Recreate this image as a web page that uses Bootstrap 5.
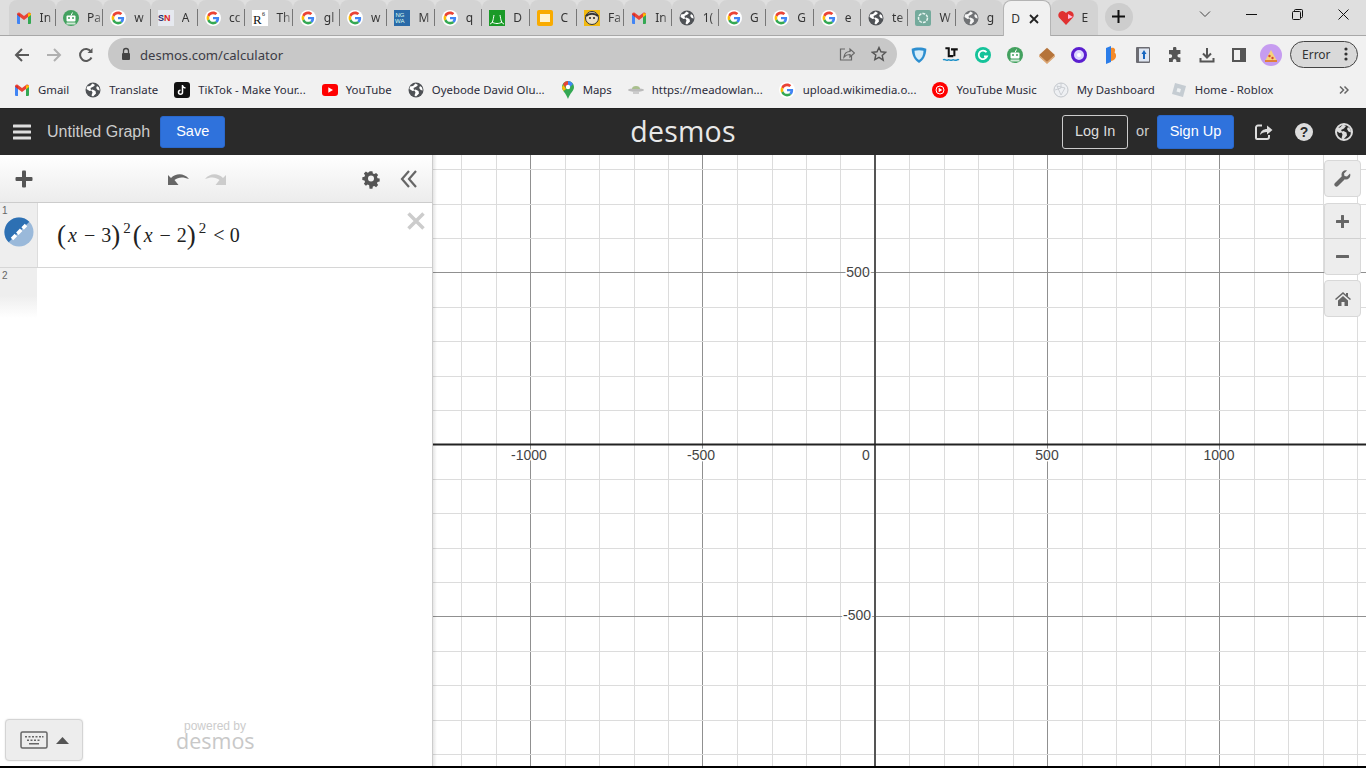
<!DOCTYPE html>
<html lang="en">
<head>
    <meta charset="UTF-8">
    <meta name="viewport" content="width=device-width, initial-scale=1.0">
    <title>Desmos | Graphing Calculator</title>
    <link href="https://cdn.jsdelivr.net/npm/bootstrap@5.3.0/dist/css/bootstrap.min.css" rel="stylesheet">
    <style>
        html, body { height: 100%; overflow: hidden; background: #fff; }
        body { font-family: "Liberation Sans", Arial, sans-serif; }

        /* browser chrome */
        .tab-strip { height: 36px; background: #dfdfdf; padding-left: 8.6px; border-bottom: 1px solid #a8a8a8; }
        .tab-item { width: 47.36px; height: 35px; background: #d3d3d3; padding-left: 7px; margin-top: 0; flex: none;
            position: relative; border-radius: 8px 8px 0 0; font: 12px "Noto Sans", sans-serif; color: #333; }
        .tab-item::after { content: ""; position: absolute; right: 0; top: 9px; height: 17px; width: 1px; background: #777; }
        .tab-item.is-active { background: #f1f1f1; height: 36px; border: 1px solid #b4b4b4; border-bottom: 0; z-index: 1; }
        .tab-item.is-active::after, .tab-item.no-sep::after { display: none; }
        .tab-item svg { flex: none; }
        .tab-title { margin-left: 8px; width: 16px; overflow: hidden; white-space: nowrap;
            -webkit-mask-image: linear-gradient(90deg, #000 40%, rgba(0,0,0,.25)); mask-image: linear-gradient(90deg, #000 40%, rgba(0,0,0,.25)); }
        .tab-new { width: 28px; height: 28px; border-radius: 50%; background: #cdcdcd; margin-left: 7px; }
        .win-ctl { width: 46px; height: 28px; flex: none; }
        .tool-bar { height: 36px; background: #f1f1f1; padding: 0; flex: none; }
        .nav-ico { width: 32px; flex: none; }
        .omni { width: 789px; height: 32px; border-radius: 16px; background: #c8c8c8; margin-left: 6px; padding: 0 10px 0 12px; flex: none;
            font: 13.1px "Noto Sans", sans-serif; color: #3c3c46; }
        .omni-url { padding-top: 2px; }
        .ext-ico { width: 32px; flex: none; }
        .ext-first { margin-left: 6px; }
        .err-pill { width: 68px; height: 27px; border: 1px solid #444; border-radius: 14px; background: #d9d9d9; margin-left: 3px;
            font: 12px "Noto Sans", sans-serif; color: #333; padding: 0 9px 0 11px; }
        .bm-bar { height: 37px; background: #f1f1f1; padding-left: 14px; flex: none; font: 11.4px "Noto Sans", sans-serif; color: #2c2c3a; border-bottom: 1px solid #222; gap: 16px; }
        .bm-item { flex: none; }
        .bm-item span { margin-left: 8px; white-space: nowrap; padding-bottom: 2px; }

        /* desmos header */
        .dcg-head { height: 46px; background: #2a2a2a; color: #ccc; flex: none; padding: 0 13px 0 13px; position: relative; font-size: 16px; }
        .dcg-title { margin-left: 16px; color: #ccc; }
        .dcg-btn { background: #2f72dc; border: 1px solid #2a68cc; color: #fff; font-size: 14.5px; border-radius: 3px; padding: 0; height: 32px; }
        .dcg-logo { position: absolute; left: 0; right: 0; top: 0; height: 46px; text-align: center; font: 400 28.5px/45px "Open Sans", sans-serif; letter-spacing: .2px; color: #e8e8e8; pointer-events: none; }
        .dcg-login { width: 66px; height: 34px; border: 1px solid #ccc; background: transparent; color: #ddd; font-size: 14.5px; border-radius: 3px; padding: 0; }
        .dcg-or { margin: 0 8px; font-size: 14.5px; }

        /* expression list */
        .dcg-body { min-height: 0; position: relative; }
        .dcg-side { width: 433px; flex: none; border-right: 1px solid #ccc; background: #fff; position: relative; z-index: 1; }
        .side-top { height: 48px; background: linear-gradient(#fff, #ececec); border-bottom: 1px solid #ccc; flex: none; padding: 0 14px 0 15px; }
        .expr-row { height: 65px; border-bottom: 1px solid #d6d6d6; flex: none; position: relative; }
        .expr-gutter { width: 38px; background: #eee; border-right: 1px solid #ddd; flex: none; font-size: 10px; color: #666; padding: 0 0 0 2px; position: relative; }
        .expr-gutter.fade-out { height: 50px; background: linear-gradient(#eee 55%, #fff); border-right-color: #fff; }
        .expr-swatch { position: absolute; left: 4px; top: 14px; }
        .expr-math { font: 20px "Liberation Serif", serif; color: #222; padding: 19px 0 0 19px; white-space: nowrap; }
        .expr-math i { margin: 0 1px 0 2px; }
        .expr-math .par { font-size: 27px; font-weight: 300; line-height: 1; vertical-align: -2px; }
        .expr-math .ope { margin: 0 6px; }
        .expr-math .ope-lt { margin: 0 5px 0 5px; }
        .expr-math sup { font-size: 15px; top: -.6em; margin: 0 2px 0 3px; }
        .expr-del { position: absolute; right: 7px; top: 9px; }
        .side-foot { margin-top: auto; height: 47px; flex: none; position: relative; }
        .kbd-btn { position: absolute; left: 5px; top: 0; width: 78px; height: 42px; background: #ededed; border: 1px solid #d4d4d4; border-radius: 4px; box-shadow: 0 0 2px rgba(0,0,0,.12); }
        .powered { position: absolute; left: 176px; top: 1px; width: 78px; text-align: center; color: #ccc; font-size: 12px; line-height: 12px; }
        .powered b { display: block; font: 400 21.5px/19px "Open Sans", sans-serif; margin-top: -1px; color: #c8c8c8; }

        /* graph paper */
        .dcg-paper { min-width: 0; position: relative; background: #fff; overflow: hidden; }
        .dcg-paper::before { content: ""; position: absolute; left: 0; top: 0; bottom: 0; width: 4px; background: linear-gradient(90deg, rgba(0,0,0,.1), transparent); }
        .dcg-paper svg.paper { display: block; }
        .paper text { font: 14px "Liberation Sans", sans-serif; fill: #444; stroke: #fff; stroke-width: 3px; paint-order: stroke; text-anchor: middle; }
        .tool-col { position: absolute; right: 5px; top: 5px; width: 37px; }
        .tool-btn { width: 37px; height: 37px; background: #ededed; border: 1px solid #d8d8d8; border-radius: 4px; }
        .tool-btn.top-half { height: 36px; border-bottom: 1px solid #d0d0d0; border-radius: 4px 4px 0 0; }
        .tool-btn.bot-half { height: 36px; border-top: 0; border-radius: 0 0 4px 4px; }
        .bot-line { height: 2px; background: #000; flex: none; }
    </style>
</head>
<body class="d-flex flex-column">
    <svg width="0" height="0" class="position-absolute">
        <symbol id="i-g" viewBox="-6 -6 60 60"><circle cx="24" cy="24" r="30" fill="#fff"/><path fill="#EA4335" d="M24 9.5c3.54 0 6.71 1.22 9.21 3.6l6.85-6.85C35.9 2.38 30.47 0 24 0 14.62 0 6.51 5.38 2.56 13.22l7.98 6.19C12.43 13.72 17.74 9.5 24 9.5z"/><path fill="#4285F4" d="M46.98 24.55c0-1.57-.15-3.09-.38-4.55H24v9.02h12.94c-.58 2.96-2.26 5.48-4.78 7.18l7.73 6c4.51-4.18 7.09-10.36 7.09-17.65z"/><path fill="#FBBC05" d="M10.53 28.59c-.48-1.45-.76-2.99-.76-4.59s.27-3.14.76-4.59l-7.98-6.19C.92 16.46 0 20.12 0 24c0 3.88.92 7.54 2.56 10.78l7.97-6.19z"/><path fill="#34A853" d="M24 48c6.48 0 11.93-2.13 15.89-5.81l-7.73-6c-2.15 1.45-4.92 2.3-8.16 2.3-6.26 0-11.57-4.22-13.47-9.91l-7.98 6.19C6.51 42.62 14.62 48 24 48z"/></symbol>
        <symbol id="i-gmail" viewBox="0 0 16 16"><path fill="#4285F4" d="M1 4h3v10H2a1 1 0 0 1-1-1z"/><path fill="#34A853" d="M12 4h3v9a1 1 0 0 1-1 1h-2z"/><path fill="#EA4335" d="M1 4.5C1 2.8 2.6 2 4 3l4 3 4-3c1.4-1 3-.2 3 1.500L12 7 8 10 4 7z"/><path fill="#C5221F" d="M1 4.500 4 7V4z" opacity=".6"/><path fill="#FBBC04" d="M12 3.200 15 3.600V5l-3 2.200z"/></symbol>
        <symbol id="i-globe" viewBox="0 0 16 16"><circle cx="8" cy="8" r="7.500" fill="#4f5256"/><path fill="#fff" d="M7.500 1.500 5 4 2 4.500 1.500 7l3 2 2-.5 1 2-1 3 1.500 1L11 11.500 10.500 9 7.500 7.500 6 8 5.500 6l3-1.500L10 3zM12 4l2 1.500.7 3-2-.5-1.500-2z"/></symbol>
        <symbol id="i-robot" viewBox="0 0 16 16"><circle cx="8" cy="8" r="8" fill="#43a15f"/><rect x="3.500" y="5.500" width="9" height="6" rx="1" fill="#fff"/><circle cx="6" cy="8" r="1" fill="#43a15f"/><circle cx="10" cy="8" r="1" fill="#43a15f"/><path d="M8 5.500 9.500 2.500" stroke="#fff"/><path d="M3.500 12.500h9v2h-9z" fill="#cfe8d6"/></symbol>
    </svg>

    <!-- tabs -->
    <div class="tab-strip d-flex flex-none" id="tabStrip"></div>

    <!-- toolbar -->
    <div class="tool-bar d-flex align-items-center">
        <div class="nav-ico text-center" style="margin-left:6px"><svg width="16" height="16" viewBox="0 0 16 16" fill="none" stroke="#5a5a5a" stroke-width="2"><path d="M15 8H2M8 2 2 8l6 6"/></svg></div>
        <div class="nav-ico text-center"><svg width="16" height="16" viewBox="0 0 16 16" fill="none" stroke="#b0b0b0" stroke-width="2"><path d="M1 8h13M8 2l6 6-6 6"/></svg></div>
        <div class="nav-ico text-center"><svg width="16" height="16" viewBox="0 0 16 16" fill="none" stroke="#5a5a5a" stroke-width="2"><path d="M13.500 10.500A6 6 0 1 1 13 4.500"/><path d="M14.500 1v5h-5z" fill="#5a5a5a" stroke="none"/></svg></div>
        <div class="omni d-flex align-items-center">
            <svg width="12" height="14" viewBox="0 0 12 14" class="me-2"><rect x="2" y="6" width="8" height="7" rx="1" fill="#444"/><path d="M3.500 6V4a2.500 2.500 0 0 1 5 0v2" fill="none" stroke="#444" stroke-width="1.300"/></svg>
            <span class="omni-url">desmos.com/calculator</span>
            <svg class="ms-auto" width="16" height="16" viewBox="0 0 16 16" fill="none" stroke="#666" stroke-width="1.200"><path d="M6 3H1.500v11h11v-4"/><path d="M5 11c.5-4 3-5.500 6-5.500V3l4.500 4-4.500 4V8.500c-2.500 0-4.500.7-6 2.500z"/></svg>
            <svg style="margin-left:16px" width="16" height="16" viewBox="0 0 16 16" fill="none" stroke="#555" stroke-width="1.400"><path d="m8 1.500 2 4.300 4.700.5-3.500 3.200 1 4.700L8 11.300l-4.200 2.400 1-4.700L1.300 6.300 6 5.800z"/></svg>
        </div>
        <div class="ext-ico ext-first text-center"><svg width="18" height="18" viewBox="0 0 16 16"><path d="M1.500 2.500C5 1 11 1 14.500 2.500 14.500 8 12 13 8 15 4 13 1.500 8 1.500 2.500z" fill="#2e8fd0"/><path d="M4 4.200c2.500-.6 5.500-.6 8 0C12 8 10.500 11 8 12.500 5.500 11 4 8 4 4.200z" fill="#d8eefa"/></svg></div>
        <div class="ext-ico text-center"><svg width="18" height="18" viewBox="0 0 16 16"><path d="M3 2h3v7h4M8 3h6M11 3v6" fill="none" stroke="#111" stroke-width="1.800"/><path d="M1 12.500c1.500-1.500 2.500 1 4 0s2.500 1 4 0 2.500 1 4 0 1.500-.5 2 0" fill="none" stroke="#1c90c8" stroke-width="1.300"/></svg></div>
        <div class="ext-ico text-center"><svg width="16" height="16" viewBox="0 0 16 16"><circle cx="8" cy="8" r="8" fill="#15c39a"/><path d="M11.500 5.300A4.300 4.300 0 1 0 12 9.500H9" fill="none" stroke="#fff" stroke-width="1.800"/></svg></div>
        <div class="ext-ico text-center"><svg width="16" height="16"><use href="#i-robot"/></svg></div>
        <div class="ext-ico text-center"><svg width="18" height="18" viewBox="0 0 16 16"><path d="M1 8 8 1.500l7 6.500-7 6.500z" fill="#b5743a"/><path d="M1 8l7 6.500 7-6.500v1.500L8 16 1 9.500z" fill="#dba26b"/></svg></div>
        <div class="ext-ico text-center"><svg width="16" height="16" viewBox="0 0 16 16"><circle cx="8" cy="8" r="6.500" fill="#dcd6ff" stroke="#5b1fd0" stroke-width="3"/><circle cx="8" cy="8" r="2" fill="#fff"/></svg></div>
        <div class="ext-ico text-center"><svg width="16" height="18" viewBox="0 0 16 18"><path d="M3 2 8 0v16l-5 2z" fill="#2b7de9"/><path d="M8 2c4-1 5 2 3.500 4.500C14 8 14 14 8 15z" fill="#f58b2a"/></svg></div>
        <div class="ext-ico text-center"><svg width="16" height="18" viewBox="0 0 16 18"><rect x="1" y="1" width="14" height="16" fill="#6c6c72" rx="1"/><rect x="4" y="2.500" width="10" height="13" fill="#dfe6f2"/><path d="M9 4 6.500 8H8v5h2V8h1.500z" fill="#1565c0"/></svg></div>
        <div class="ext-ico text-center"><svg width="16" height="16" viewBox="0 0 16 16"><path fill="#555" d="M6 1.500a1.700 1.700 0 0 1 3.400 0V3h4v4h-1.200a1.800 1.800 0 0 0 0 3.600h1.200V15h-4v-1.200a1.800 1.800 0 0 0-3.600 0V15H2v-4h1.300a1.900 1.900 0 0 0 0-3.800H2V3h4z"/></svg></div>
        <div class="ext-ico text-center"><svg width="16" height="16" viewBox="0 0 16 16" fill="none" stroke="#555" stroke-width="2"><path d="M8 1v9M4 6.500 8 10.500l4-4M1.500 11v3.500h13V11"/></svg></div>
        <div class="ext-ico text-center"><svg width="14" height="14" viewBox="0 0 14 14"><rect x="1" y="1" width="12" height="12" fill="none" stroke="#555" stroke-width="2"/><rect x="8" y="1" width="5" height="12" fill="#555"/></svg></div>
        <div class="ext-ico text-center"><svg width="22" height="22" viewBox="0 0 22 22"><circle cx="11" cy="11" r="11" fill="#c69cf0"/><path d="M11 6 5.500 16h11z" fill="#f6d27a"/><circle cx="9.500" cy="12" r="1.200" fill="#d8442f"/><circle cx="12.500" cy="14" r="1.200" fill="#d8442f"/><path d="M5 16h12v2H5z" fill="#e0813a"/></svg></div>
        <div class="err-pill d-flex align-items-center justify-content-between">
            <span>Error</span>
            <svg width="4" height="14" viewBox="0 0 4 14" fill="#333"><circle cx="2" cy="2" r="1.600"/><circle cx="2" cy="7" r="1.600"/><circle cx="2" cy="12" r="1.600"/></svg>
        </div>
    </div>

    <!-- bookmarks -->
    <div class="bm-bar d-flex align-items-center">
        <div class="bm-item d-flex align-items-center"><svg width="16" height="16"><use href="#i-gmail"/></svg><span>Gmail</span></div>
        <div class="bm-item d-flex align-items-center"><svg width="16" height="16"><use href="#i-globe"/></svg><span>Translate</span></div>
        <div class="bm-item d-flex align-items-center"><svg width="16" height="16" viewBox="0 0 16 16"><rect width="16" height="16" rx="3" fill="#111"/><path d="M8.500 3v7.300a2 2 0 1 1-2-2M8.500 3c.2 1.800 1.300 2.800 3 3" fill="none" stroke="#fff" stroke-width="1.500"/></svg><span>TikTok - Make Your...</span></div>
        <div class="bm-item d-flex align-items-center"><svg width="16" height="12" viewBox="0 0 16 12"><rect width="16" height="12" rx="3" fill="#f00"/><path d="M6.300 3.300v5.400L11 6z" fill="#fff"/></svg><span>YouTube</span></div>
        <div class="bm-item d-flex align-items-center"><svg width="16" height="16"><use href="#i-globe"/></svg><span>Oyebode David Olu...</span></div>
        <div class="bm-item d-flex align-items-center"><svg width="14" height="18" viewBox="0 0 14 18"><path d="M7 0a6 6 0 0 1 6 6c0 4-4 6-6 12C5 12 1 10 1 6a6 6 0 0 1 6-6z" fill="#34a853"/><path d="M2 3a6 6 0 0 1 5-3v3.500L4 6z" fill="#ea4335"/><path d="M7 0a6 6 0 0 1 5 3L9 6 7 3.500z" fill="#4285f4"/><path d="M1 6c0 1.500.7 2.800 1.500 4L5 8 2.500 4z" fill="#fbbc04"/><circle cx="7" cy="6" r="2.200" fill="#fff"/></svg><span>Maps</span></div>
        <div class="bm-item d-flex align-items-center"><svg width="16" height="12" viewBox="0 0 16 12"><ellipse cx="8" cy="6" rx="8" ry="1.800" fill="#bbb"/><path d="M4 5a4 3 0 0 1 8 0z" fill="#a9bf8d"/><path d="M5 8h6v2H5z" fill="#ccc"/></svg><span>https://meadowlan...</span></div>
        <div class="bm-item d-flex align-items-center"><svg width="16" height="16"><use href="#i-g"/></svg><span>upload.wikimedia.o...</span></div>
        <div class="bm-item d-flex align-items-center"><svg width="16" height="16" viewBox="0 0 16 16"><circle cx="8" cy="8" r="8" fill="#f00"/><circle cx="8" cy="8" r="4" fill="none" stroke="#fff"/><path d="M6.700 5.800v4.400L10.300 8z" fill="#fff"/></svg><span>YouTube Music</span></div>
        <div class="bm-item d-flex align-items-center"><svg width="16" height="16" viewBox="0 0 16 16"><circle cx="8" cy="8" r="7" fill="#eef0f3" stroke="#c3c7cc"/><path d="M4 4l8 2-4 7zM8 1v5M2 8l6-2" fill="none" stroke="#c3c7cc" stroke-width=".8"/></svg><span>My Dashboard</span></div>
        <div class="bm-item d-flex align-items-center"><svg width="16" height="16" viewBox="0 0 16 16"><path d="M4 1 15 4l-3 11L1 12z" fill="#c5ccd2"/><path d="M6.500 6l3.500 1-1 3.500L5.500 9.500z" fill="#eef1f3"/></svg><span>Home - Roblox</span></div>
        <svg class="ms-auto" style="margin-right:17px" width="10" height="10" viewBox="0 0 10 10" fill="none" stroke="#666" stroke-width="1.500"><path d="M1 1.500 4.500 5 1 8.500M5.500 1.500 9 5 5.500 8.500"/></svg>
    </div>

    <!-- desmos header -->
    <div class="dcg-head d-flex align-items-center">
        <svg width="18" height="16" viewBox="0 0 18 16" fill="#ddd"><rect width="18" height="3" y="0.500" rx=".5"/><rect width="18" height="3" y="6.500" rx=".5"/><rect width="18" height="3" y="12.500" rx=".5"/></svg>
        <span class="dcg-title">Untitled Graph</span>
        <button type="button" class="btn dcg-btn" style="width:65px;margin-left:10px">Save</button>
        <div class="dcg-logo">desmos</div>
        <div class="ms-auto d-flex align-items-center">
            <button type="button" class="btn dcg-login">Log In</button>
            <span class="dcg-or">or</span>
            <button type="button" class="btn dcg-btn" style="width:77px;height:34px">Sign Up</button>
            <svg style="margin-left:21px" width="18" height="18" viewBox="0 0 18 18" fill="none" stroke="#ddd" stroke-width="2"><path d="M7 2.500H3a2 2 0 0 0-2 2V15a1 1 0 0 0 1 1h10a2 2 0 0 0 2-2v-2"/><path d="M5 12c.5-4 3.500-6 7-6V2.500L17.500 7 12 11.500V9c-3 0-5.500 1-7 3z" fill="#ddd" stroke="none"/></svg>
            <svg style="margin-left:22px" width="18" height="18" viewBox="0 0 18 18"><circle cx="9" cy="9" r="9" fill="#ddd"/><text x="9" y="14" text-anchor="middle" font-family="Liberation Sans" font-weight="700" font-size="14" fill="#2a2a2a">?</text></svg>
            <svg style="margin-left:22px" width="18" height="18" viewBox="0 0 18 18"><circle cx="9" cy="9" r="8" fill="none" stroke="#ddd" stroke-width="2"/><path fill="#ddd" d="M8 1.500 5 4.500 2 5l-.5 3 3 2 2-.5 1 2-1 4 2 1 3.500-4-.5-3-3-1.500-1.500.5L6 7l3-1.500L11 3zM13 4l2.500 2 .5 3.500-2.500-1-1.500-2.500z"/></svg>
        </div>
    </div>

    <div class="dcg-body d-flex flex-grow-1">
        <!-- expression list -->
        <div class="dcg-side d-flex flex-column">
            <div class="side-top d-flex align-items-center">
                <svg width="18" height="18" viewBox="0 0 18 18" fill="#555"><rect x="7" y="0.500" width="4" height="17" rx="1"/><rect x="0.500" y="7" width="17" height="4" rx="1"/></svg>
                <svg style="margin-left:134px" width="22" height="14" viewBox="0 0 22 14" fill="#666"><path d="M1 13V3l3 3C9 1 17 1 22 7 16 4.500 11 5 7.500 8l4 5z"/></svg>
                <svg style="margin-left:16px" width="22" height="14" viewBox="0 0 22 14" fill="#ccc"><path d="M21 13V3l-3 3C13 1 5 1 0 7c6-2.500 11-2 14.500 1l-4 5z"/></svg>
                <svg class="ms-auto" width="20" height="20" viewBox="0 0 20 20"><path fill="#555" d="M8.300 1h3.400l.5 2.500 1.700.7 2.100-1.400 2.400 2.400-1.400 2.100.7 1.700 2.500.5v3.400l-2.500.5-.7 1.700 1.400 2.100-2.400 2.400-2.100-1.400-1.700.7-.5 2.500H8.300L7.800 17.300l-1.700-.7L4 18 1.600 15.600 3 13.500l-.7-1.700L-.2 11.300V7.900L2.300 7.400 3 5.700 1.600 3.600 4 1.200 6.100 2.600 7.800 1.900z" transform="translate(1.500 1.500) scale(.85)"/><circle cx="10" cy="9.600" r="3" fill="#f3f3f3"/></svg>
                <svg style="margin-left:19px" width="18" height="20" viewBox="0 0 18 20" fill="none" stroke="#666" stroke-width="2.200"><path d="M9 2 2 10l7 8M16 2 9 10l7 8"/></svg>
            </div>
            <div class="expr-row d-flex">
                <div class="expr-gutter">1
                    <svg class="expr-swatch" width="30" height="30" viewBox="0 0 30 30"><circle cx="15" cy="15" r="14.500" fill="#9ab9da"/><path d="M4.700 25.300A14.500 14.500 0 0 1 25.300 4.700z" fill="#2d70b3"/><path d="M8 22 22 8" stroke="#fff" stroke-width="3.500" stroke-dasharray="5.500 2"/></svg>
                </div>
                <div class="expr-math"><span class="par">(</span><i>x</i><span class="ope">−</span>3<span class="par">)</span><sup>2</sup><span class="par">(</span><i>x</i><span class="ope">−</span>2<span class="par">)</span><sup>2</sup><span class="ope-lt">&lt;</span>0</div>
                <svg class="expr-del" width="18" height="18" viewBox="0 0 18 18" stroke="#ccc" stroke-width="3.500"><path d="M1.500 1.500l15 15M16.500 1.500l-15 15"/></svg>
            </div>
            <div class="d-flex flex-none"><div class="expr-gutter fade-out">2</div></div>
            <div class="side-foot">
                <div class="kbd-btn d-flex align-items-center justify-content-center">
                    <svg width="28" height="18" viewBox="0 0 28 18" fill="#666"><rect x="1" y="1" width="26" height="16" rx="1.500" fill="none" stroke="#666" stroke-width="1.500"/><path d="M5 5h2v1.500H5zM8.500 5h2v1.500h-2zM12 5h2v1.500h-2zM15.500 5h2v1.500h-2zM19 5h2v1.500h-2zM22 5h1.500v1.500H22zM7 8.500h2V10H7zM10.500 8.500h2V10h-2zM14 8.500h2V10h-2zM17.500 8.500h2V10h-2zM9 12h10v1.500H9z"/></svg>
                    <svg class="ms-2" width="13" height="7" viewBox="0 0 13 7" fill="#555"><path d="M6.500 0 13 7H0z"/></svg>
                </div>
                <div class="powered">powered by<b>desmos</b></div>
            </div>
        </div>

        <!-- graph paper -->
        <div class="dcg-paper flex-grow-1">
            <svg class="paper" id="paper" width="933" height="611"></svg>
            <div class="tool-col d-flex flex-column">
                <div class="tool-btn d-flex align-items-center justify-content-center"><svg width="17" height="17" viewBox="0 0 17 17" fill="#666"><path d="M16 3.500 13 6.500 10.500 6 10 3.500 13 .500C10.500-.3 7.500 1.500 7.500 4.500c0 .6.100 1.200.3 1.700L1 13a2 2 0 0 0 3 3l6.800-6.800c3 1.100 6.700-2 5.200-5.700z"/></svg></div>
                <div class="tool-btn top-half d-flex align-items-center justify-content-center" style="margin-top:6px"><svg width="13" height="13" viewBox="0 0 13 13" fill="#666"><rect x="5" width="3" height="13" rx=".5"/><rect y="5" width="13" height="3" rx=".5"/></svg></div>
                <div class="tool-btn bot-half d-flex align-items-center justify-content-center"><svg width="13" height="3" viewBox="0 0 13 3" fill="#666"><rect width="13" height="3" rx=".5"/></svg></div>
                <div class="tool-btn d-flex align-items-center justify-content-center" style="margin-top:5px"><svg width="16" height="14" viewBox="0 0 16 14" fill="#666"><path d="M8 0 0 7l1 1 7-6 7 6 1-1-3-2.600V1h-2v1.700z"/><path d="M3 8.500 8 4l5 4.500V14H9.500V10h-3v4H3z"/></svg></div>
            </div>
        </div>
    </div>
    <div class="bot-line"></div>

    <script>
        // Вкладки браузера
        const tabs = [
            ['gmail', 'In'], ['robot', 'Pa'], ['g', 'w'], ['sn', 'A'], ['g', 'cc'], ['r6', 'Th'], ['g', 'gl'], ['g', 'w'],
            ['ngwa', 'M'], ['g', 'q'], ['green', 'D'], ['yellow', 'C'], ['face', 'Fa'], ['gmail', 'In'], ['globe', '1('],
            ['g', 'G'], ['g', 'G'], ['g', 'e'], ['globe', 'te'], ['gpt', 'W'], ['globe2', 'g'], ['active', 'D'], ['heart', 'E']
        ];
        const customIcons = {
            sn: '<svg width="16" height="16" viewBox="0 0 16 16"><rect width="16" height="16" fill="#e6e9ef"/><text x="0" y="11" font-family="Liberation Sans" font-size="9" font-weight="700"><tspan fill="#1d2f6f">S</tspan><tspan fill="#d22">N</tspan></text></svg>',
            r6: '<svg width="16" height="16" viewBox="0 0 16 16"><rect width="16" height="16" fill="#fff"/><text x="1" y="14" font-family="Liberation Serif" font-size="13" fill="#111">R</text><text x="10" y="6" font-family="Liberation Serif" font-size="6" fill="#111">6</text></svg>',
            ngwa: '<svg width="16" height="16" viewBox="0 0 16 16"><rect width="16" height="16" fill="#2a6aa8"/><text x="1.500" y="7" font-family="Liberation Sans" font-size="6" fill="#dfe">NG</text><text x="1" y="13" font-family="Liberation Sans" font-size="6" fill="#dfe">WA</text></svg>',
            green: '<svg width="16" height="16" viewBox="0 0 16 16"><rect width="16" height="16" fill="#1a9a28"/><path d="M1 14c3-1 3-4 4-9M15 14c-3-1-3-4-4-9M3 12c3 2 7 2 10 0" fill="none" stroke="#fff"/></svg>',
            yellow: '<svg width="16" height="16" viewBox="0 0 16 16"><rect width="16" height="16" rx="2" fill="#f9ab00"/><rect x="3" y="4" width="10" height="8" fill="#fff3cf"/></svg>',
            face: '<svg width="16" height="16" viewBox="0 0 16 16"><rect width="16" height="16" fill="#f2b90f"/><circle cx="8" cy="8" r="6.500" fill="#eadfc8" stroke="#333"/><path d="M2 6c3-3 9-3 12 0" stroke="#333" fill="none" stroke-width="2"/><circle cx="6" cy="8" r="1" fill="#222"/><circle cx="10" cy="8" r="1" fill="#222"/></svg>',
            gpt: '<svg width="16" height="16" viewBox="0 0 16 16"><rect width="16" height="16" rx="2" fill="#74aa9c"/><circle cx="8" cy="8" r="4.500" fill="none" stroke="#e8f5f1" stroke-width="1.500" stroke-dasharray="3 1"/></svg>',
            heart: '<svg width="16" height="14" viewBox="0 0 16 14"><path d="M8 14 1 6.500A4 4 0 0 1 8 2a4 4 0 0 1 7 4.500z" fill="#e03131"/><path d="M10 3l5 3-5 2z" fill="#fbd"/></svg>'
        };
        const strip = document.getElementById('tabStrip');
        tabs.forEach(([icon, title], i) => {
            const tab = document.createElement('div');
            tab.className = 'tab-item d-flex align-items-center';
            let svg = customIcons[icon] || '';
            if (icon === 'g' || icon === 'gmail' || icon === 'robot' || icon === 'globe')
                svg = `<svg width="16" height="16"><use href="#i-${icon}"/></svg>`;
            if (icon === 'globe2')
                svg = '<svg width="16" height="16" opacity=".75"><use href="#i-globe"/></svg>';
            if (icon === 'active') {
                tab.classList.add('is-active');
                tab.innerHTML = `<span style="margin-left:0">${title}</span><svg class="ms-auto" style="margin-right:11px" width="10" height="10" viewBox="0 0 10 10" stroke="#222" stroke-width="1.800"><path d="M1 1l8 8M9 1 1 9"/></svg>`;
            } else {
                if (i === 20 || i === 22) tab.classList.add('no-sep');
                tab.innerHTML = svg + `<span class="tab-title">${title}</span>`;
            }
            strip.appendChild(tab);
        });
        strip.insertAdjacentHTML('beforeend', `
            <div class="tab-new d-flex align-items-center justify-content-center flex-none align-self-center" style="margin-top:-2px"><svg width="13" height="13" viewBox="0 0 13 13" fill="#111"><rect x="5.500" width="2" height="13"/><rect y="5.500" width="13" height="2"/></svg></div>
            <div class="ms-auto d-flex align-items-start" style="margin-right:0">
                <div class="win-ctl d-flex align-items-center justify-content-center"><svg width="12" height="7" viewBox="0 0 12 7" fill="none" stroke="#444"><path d="M1 .5l5 5 5-5"/></svg></div>
                <div class="win-ctl d-flex align-items-center justify-content-center"><svg width="11" height="1" fill="#111"><rect width="11" height="1"/></svg></div>
                <div class="win-ctl d-flex align-items-center justify-content-center"><svg width="11" height="11" viewBox="0 0 11 11" fill="none" stroke="#111"><rect x=".5" y="2.500" width="8" height="8" rx="1"/><path d="M2.500 2.500v-1a1 1 0 0 1 1-1h6a1 1 0 0 1 1 1v6a1 1 0 0 1-1 1h-1"/></svg></div>
                <div class="win-ctl d-flex align-items-center justify-content-center"><svg width="11" height="11" viewBox="0 0 11 11" stroke="#111"><path d="M.5.500l10 10M10.500.500l-10 10"/></svg></div>
            </div>`);

        // Координатная сетка
        const paper = document.getElementById('paper');
        const ox = 875 - 433, oy = 444.5 - 155;
        let out = '';
        for (let k = -14; k <= 15; k++) {
            const major = k % 5 === 0;
            const x = Math.floor(ox + (major ? 0 : .4) + k * 34.45) + .5;
            if (x < 0 || x > 933 || k === 0) continue;
            out += `<line x1="${x}" x2="${x}" y1="0" y2="611" stroke="${major ? '#909090' : '#dcdcdc'}"/>`;
        }
        for (let k = -9; k <= 10; k++) {
            const y = Math.floor(oy + .4 + k * 34.4) + .5;
            if (y < 0 || y > 611 || k === 0) continue;
            out += `<line x1="0" x2="933" y1="${y}" y2="${y}" stroke="${k % 5 === 0 ? '#909090' : '#dcdcdc'}"/>`;
        }
        out += `<line x1="${ox}" x2="${ox}" y1="0" y2="611" stroke="#555" stroke-width="2"/>`;
        out += `<line x1="0" x2="933" y1="${oy}" y2="${oy}" stroke="#222" stroke-width="2"/>`;
        const labels = [['-1000', 96, 305], ['-500', 268, 305], ['500', 614, 305], ['1000', 786, 305], ['0', 433, 305], ['500', 425, 122], ['-500', 424, 465]];
        labels.forEach(([t, x, y]) => {
            out += `<text x="${x}" y="${y}">${t}</text>`;
        });
        paper.innerHTML = out;
    </script>
    <script src="https://cdn.jsdelivr.net/npm/bootstrap@5.3.0/dist/js/bootstrap.bundle.min.js"></script>
</body>
</html>
